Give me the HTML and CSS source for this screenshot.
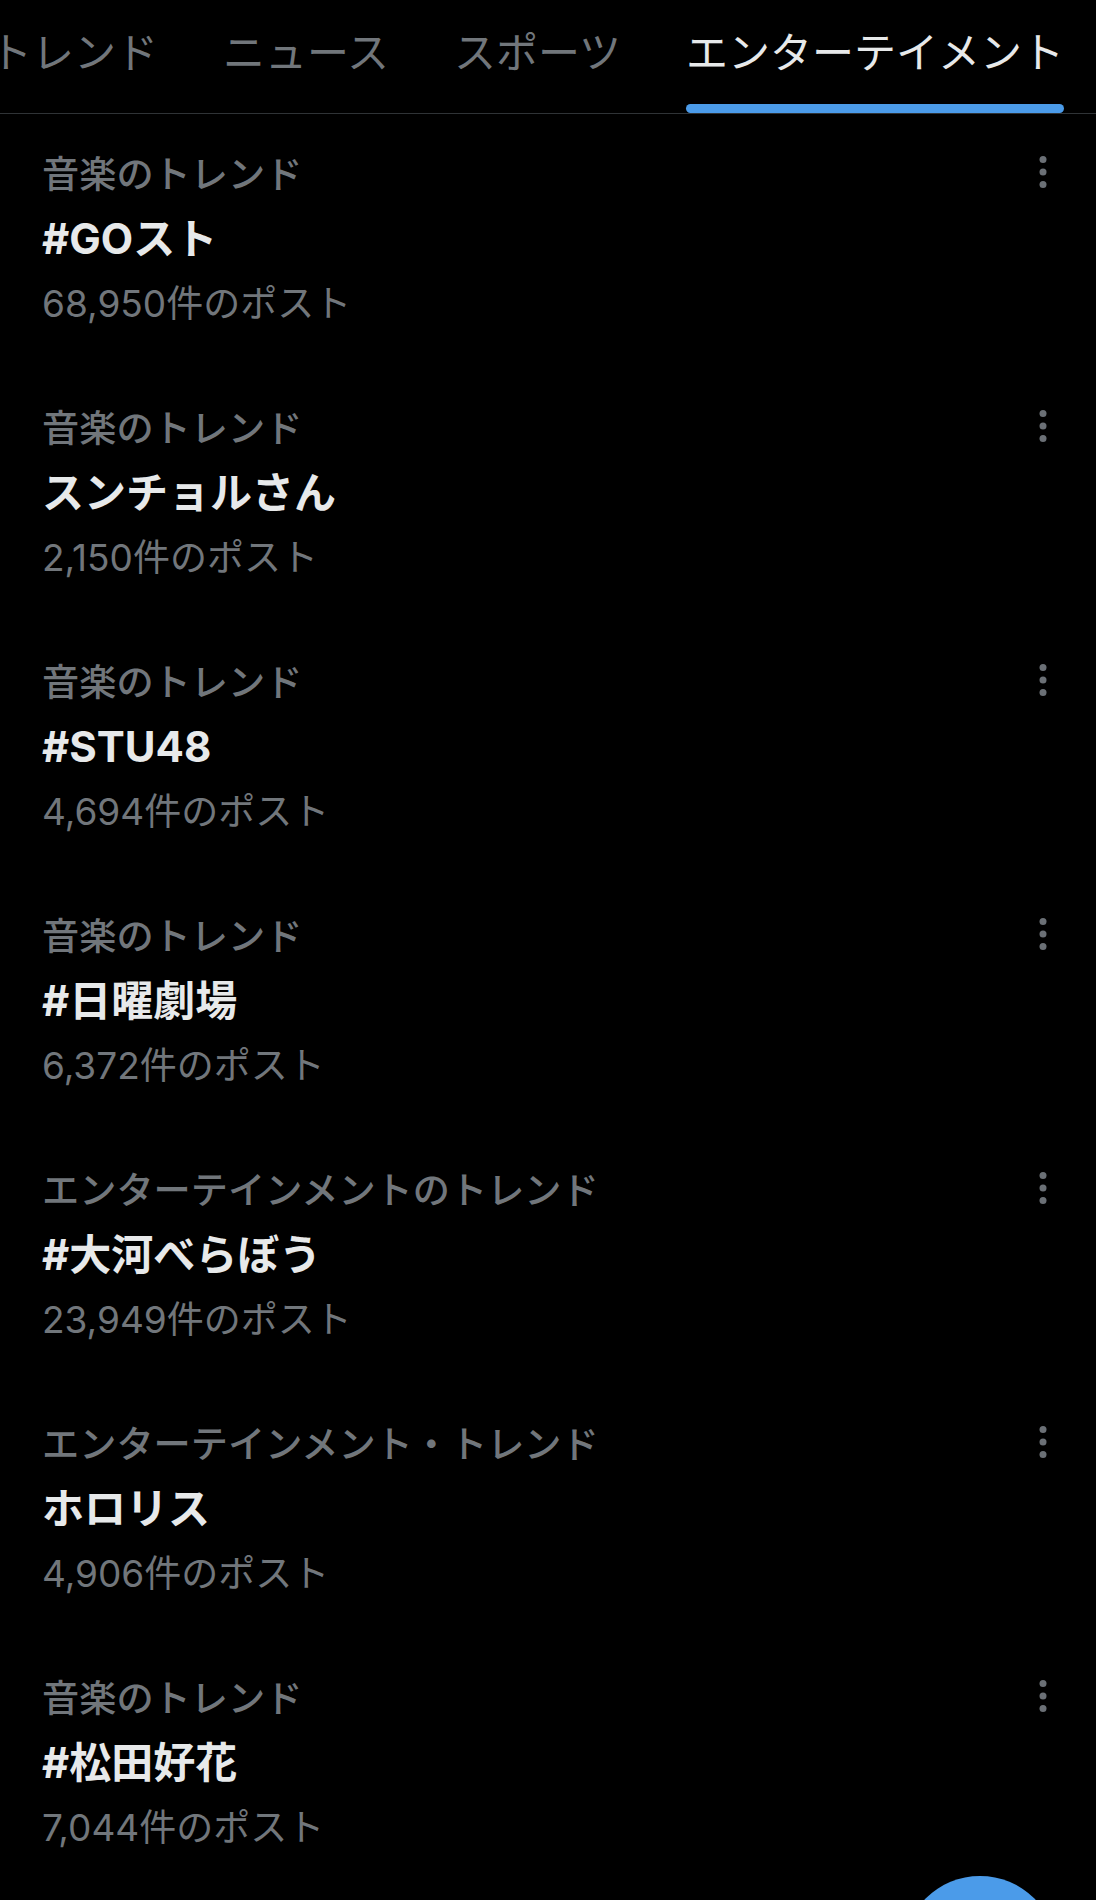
FILE: index.html
```html
<!DOCTYPE html>
<html lang="ja">
<head>
<meta charset="utf-8">
<title>トレンド</title>
<link rel="stylesheet" href="styles.css">
</head>
<body>
<nav class="tabs">
  <div class="tab"><span class="tab-label">トレンド</span><span class="tab-bar"></span></div>
  <div class="tab"><span class="tab-label">ニュース</span><span class="tab-bar"></span></div>
  <div class="tab"><span class="tab-label">スポーツ</span><span class="tab-bar"></span></div>
  <div class="tab active"><span class="tab-label">エンターテイメント</span><span class="tab-bar"></span></div>
</nav>
<main class="list">
  <div class="trend">
    <div class="trend-head"><span class="cat">音楽のトレンド</span><svg class="more" viewBox="0 0 24 34"><circle cx="12" cy="4.5" r="3.5"/><circle cx="12" cy="17" r="3.5"/><circle cx="12" cy="29.5" r="3.5"/></svg></div>
    <div class="title">#GOスト</div>
    <div class="count">68,950件のポスト</div>
  </div>
  <div class="trend">
    <div class="trend-head"><span class="cat">音楽のトレンド</span><svg class="more" viewBox="0 0 24 34"><circle cx="12" cy="4.5" r="3.5"/><circle cx="12" cy="17" r="3.5"/><circle cx="12" cy="29.5" r="3.5"/></svg></div>
    <div class="title">スンチョルさん</div>
    <div class="count">2,150件のポスト</div>
  </div>
  <div class="trend">
    <div class="trend-head"><span class="cat">音楽のトレンド</span><svg class="more" viewBox="0 0 24 34"><circle cx="12" cy="4.5" r="3.5"/><circle cx="12" cy="17" r="3.5"/><circle cx="12" cy="29.5" r="3.5"/></svg></div>
    <div class="title">#STU48</div>
    <div class="count">4,694件のポスト</div>
  </div>
  <div class="trend">
    <div class="trend-head"><span class="cat">音楽のトレンド</span><svg class="more" viewBox="0 0 24 34"><circle cx="12" cy="4.5" r="3.5"/><circle cx="12" cy="17" r="3.5"/><circle cx="12" cy="29.5" r="3.5"/></svg></div>
    <div class="title">#日曜劇場</div>
    <div class="count">6,372件のポスト</div>
  </div>
  <div class="trend">
    <div class="trend-head"><span class="cat">エンターテインメントのトレンド</span><svg class="more" viewBox="0 0 24 34"><circle cx="12" cy="4.5" r="3.5"/><circle cx="12" cy="17" r="3.5"/><circle cx="12" cy="29.5" r="3.5"/></svg></div>
    <div class="title">#大河べらぼう</div>
    <div class="count">23,949件のポスト</div>
  </div>
  <div class="trend">
    <div class="trend-head"><span class="cat">エンターテインメント・トレンド</span><svg class="more" viewBox="0 0 24 34"><circle cx="12" cy="4.5" r="3.5"/><circle cx="12" cy="17" r="3.5"/><circle cx="12" cy="29.5" r="3.5"/></svg></div>
    <div class="title">ホロリス</div>
    <div class="count">4,906件のポスト</div>
  </div>
  <div class="trend">
    <div class="trend-head"><span class="cat">音楽のトレンド</span><svg class="more" viewBox="0 0 24 34"><circle cx="12" cy="4.5" r="3.5"/><circle cx="12" cy="17" r="3.5"/><circle cx="12" cy="29.5" r="3.5"/></svg></div>
    <div class="title">#松田好花</div>
    <div class="count">7,044件のポスト</div>
  </div>
</main>
<div class="fab"></div>
</body>
</html>
```
FILE: styles.css
```css
html, body {
  margin: 0;
  padding: 0;
  background: #000;
}
body {
  width: 1096px;
  height: 1900px;
  overflow: hidden;
  font-family: "Inter", "Noto Sans CJK JP", sans-serif;
  color: #e7e9ea;
}
.tabs {
  display: flex;
  gap: 65px;
  height: 113px;
  border-bottom: 1px solid #2f3336;
  margin-left: -10px;
  overflow: hidden;
  white-space: nowrap;
}
.tab {
  display: flex;
  flex-direction: column;
  padding-top: 26px;
  box-sizing: border-box;
  height: 113px;
  color: #71767b;
}
.tab-label {
  font-family: "Noto Sans CJK JP", sans-serif;
  font-size: 42px;
  line-height: 48px;
}
.tab-bar {
  margin-top: auto;
  height: 9px;
  border-radius: 5px;
}
.tab.active {
  color: #e7e9ea;
}
.tab.active .tab-bar {
  background: #4b9be9;
}
.trend {
  padding: 33px 41px 41px 42px;
}
.trend-head {
  display: flex;
  justify-content: space-between;
  align-items: center;
  height: 50px;
}
.cat {
  font-family: "Noto Sans CJK JP", sans-serif;
  font-size: 37.2px;
  font-weight: 500;
  line-height: 50px;
  color: #71767b;
}
.more {
  width: 24px;
  height: 34px;
  fill: #6b7076;
}
.title {
  font-size: 42px;
  font-weight: 700;
  line-height: 84px;
  color: #e7e9ea;
}
.count {
  font-size: 37px;
  line-height: 46px;
  color: #71767b;
}
.fab {
  position: fixed;
  right: 39px;
  top: 1876px;
  width: 154px;
  height: 154px;
  border-radius: 50%;
  background: #4b9be9;
}
```
